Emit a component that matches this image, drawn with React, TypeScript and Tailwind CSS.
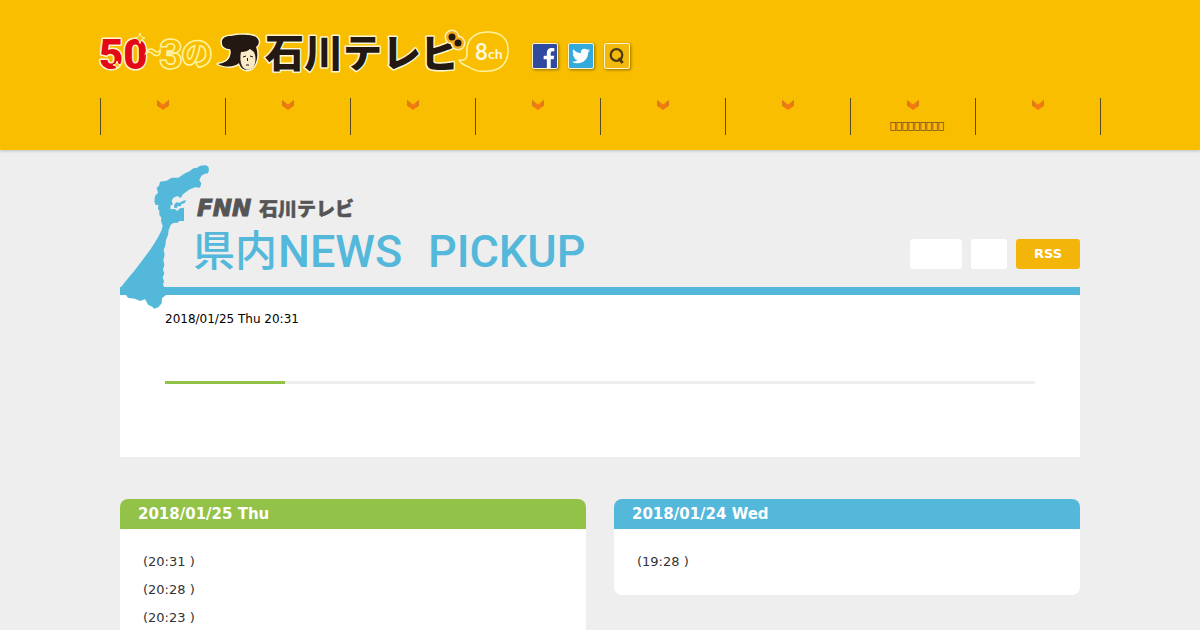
import type { ReactNode } from "react"
import { FaFacebookF, FaTwitter } from "react-icons/fa"

interface NavItem {
  id: string
  label: string
}

interface NewsDay {
  date: string
  color: string
  times: string[]
}

const navItems: NavItem[] = [
  { id: "nav1", label: "" },
  { id: "nav2", label: "" },
  { id: "nav3", label: "" },
  { id: "nav4", label: "" },
  { id: "nav5", label: "" },
  { id: "nav6", label: "" },
  { id: "nav7", label: "\uE000\uE000\uE000\uE000\uE000\uE000\uE000\uE000\uE000" },
  { id: "nav8", label: "" },
]

const newsDays: NewsDay[] = [
  { date: "2018/01/25 Thu", color: "bg-[#93c248]", times: ["20:31", "20:28", "20:23"] },
  { date: "2018/01/24 Wed", color: "bg-[#54b8db]", times: ["19:28"] },
]

function Logo() {
  return (
    <svg width="412" height="50" viewBox="100 28 412 50" className="block overflow-visible">
      <text
        x="99"
        y="69"
        fontSize="42"
        className="font-['Roboto',sans-serif] font-black"
        fill="#e20a16"
        stroke="#fff6d0"
        strokeWidth="3"
        strokeLinejoin="round"
        style={{ paintOrder: "stroke" }}
      >
        50
      </text>
      <path d="M140 33l1.500 4 3.500 1-3.500 1.500-1.500 4-1.500-4-3.500-1.500 3.500-1z" fill="#f9be00" stroke="#fff3b0" />
      <path d="M117 61l1 3 3 1-3 1-1 3-1-3-3-1 3-1z" fill="#f9be00" stroke="#fff3b0" />
      <path d="M146 53c3-6 7-4 9-2s4 1 5-1c1 6-4 7-7 4-2-2-4-3-7-1z" fill="#f9be00" stroke="#fff3a0" strokeWidth="1.500" />
      <text
        x="159"
        y="69"
        fontSize="42"
        className="font-['Roboto',sans-serif] font-bold"
        fill="none"
        stroke="#fff3a0"
        strokeWidth="1.500"
      >
        3
      </text>
      <text
        x="181"
        y="65"
        fontSize="32"
        className="font-['Noto_Sans_CJK_JP',sans-serif] font-black"
        fill="none"
        stroke="#fff3a0"
        strokeWidth="1.500"
      >
        の
      </text>

      {/* mascot */}
      <path
        d="M222 43c-1-5 4-7 9-7 8-2 23-2 26 2 3 3 2 7-1 9 2 5 2 14-2 19-4 6-13 5-15-3-4 4-13 5-21 1 7-1 11-4 12-8 1-3 1-5 0-7-4 0-8-2-8-6z"
        fill="#241813"
        stroke="#fff6d0"
        strokeWidth="3"
        strokeLinejoin="round"
        style={{ paintOrder: "stroke" }}
      />
      <path d="M241 52c4 0 7-1 9-3l4 3c2 4 2 10 0 14-3 5-9 5-12 0-2-4-2-10-1-14z" fill="#fbeac6" />
      <path d="M243 57l3-1M250 56l3 1M247.500 58v3M246 65h3" fill="none" stroke="#241813" />

      <text
        x="265"
        y="67"
        fontSize="39"
        className="font-['Noto_Sans_CJK_JP',sans-serif] font-black"
        fill="#241813"
        stroke="#fff6d0"
        strokeWidth="3"
        strokeLinejoin="round"
        style={{ paintOrder: "stroke" }}
      >
        石川テレビ
      </text>
      <circle cx="452" cy="37" r="7.500" fill="#fff3b0" />
      <circle cx="458" cy="43" r="7.500" fill="#fff3b0" />
      <circle cx="452" cy="37" r="6" fill="#f6ad1b" />
      <circle cx="458" cy="43" r="6" fill="#f6ad1b" />
      <circle cx="452" cy="37" r="3.500" fill="#241813" />
      <circle cx="458" cy="43" r="3.500" fill="#241813" />

      <path
        d="M459 60c5 1 8-1 8-5-1-11 3-19 13-22 12-3 27 0 28 15 1 15-8 23-20 23-8 1-14 0-19-4-3-1-7-2-10-7z"
        fill="none"
        stroke="#fff3a0"
        strokeWidth="1.500"
        strokeLinejoin="round"
      />
      <text x="475" y="60" fontSize="22" className="font-['Lato',sans-serif] font-bold" fill="#fff8d8">
        8
      </text>
      <text x="488" y="59" fontSize="14" className="font-['Lato',sans-serif] font-bold" fill="#fff8d8">
        ch
      </text>
    </svg>
  )
}

function PrefectureMap() {
  return (
    <svg width="90" height="145" viewBox="30 30 270 435" className="absolute left-0 top-[15px]" aria-hidden="true">
      <path
        fill="#54b8db"
        d="M295 35L288 31 270 32 262 38 250 40 240 48 225 55 205 68 185 68 170 77 150 80 147 92 140 98 144 113 135 123 133 140 137 150 145 150 144 162 148 168 148 180 154 188 153 198 158 212 155 225 145 245 135 262 120 285 100 312 75 345 50 375 38 390 30 400 30 415 48 420 54 428 62 430 75 431 90 438 105 433 115 450 127 455 132 461 145 457 155 445 156 430 168 420 165 398 159 390 162 378 158 368 163 355 159 345 163 330 160 315 164 300 161 285 166 272 168 255 174 240 176 225 182 210 190 204 203 203 208 198 222 198 222 158 210 160 202 168 194 162 182 163 181 152 189 148 185 138 190 128 202 123 212 129 219 118 232 108 240 103 255 97 270 98 274 85 268 76 274 62 285 56 294 55 297 45z"
      />
      <path fill="#54b8db" d="M192 151L199 142 209 143 218 138 228 135 225 143 214 148 213 153 203 154 200 160 193 158z" />
    </svg>
  )
}

function SocialLink({ label, className, children }: { label: string; className: string; children: ReactNode }) {
  return (
    <a
      href="#"
      aria-label={label}
      className={`flex h-[26px] w-[26px] justify-center overflow-hidden rounded-xs border border-[#fff6d0] shadow-[1px_1px_3px_rgba(0,0,0,0.4)] ${className}`}
    >
      {children}
    </a>
  )
}

function DayCard({ day }: { day: NewsDay }) {
  return (
    <section className="overflow-hidden rounded-lg bg-white">
      <h2 className={`px-[18px] text-[15px] leading-[30px] font-bold text-white ${day.color}`}>{day.date}</h2>
      <ul className="px-[23px] py-[19px] text-[13px] leading-7 text-[#333]">
        {day.times.map((time) => (
          <li key={time}>({time} )</li>
        ))}
      </ul>
    </section>
  )
}

export default function App() {
  return (
    <div className="min-h-screen bg-[#eee] font-['DejaVu_Sans','Noto_Sans_CJK_JP',sans-serif]">
      <header className="relative bg-[#f9be00] pb-[15px] shadow-[0_1px_3px_rgba(0,0,0,0.2)]">
        <div className="mx-auto max-w-[1000px]">
          <div className="flex items-start gap-5 pt-7 pb-5">
            <a href="#" aria-label="石川テレビ">
              <Logo />
            </a>
            <div className="flex gap-[10px] pt-[15px]">
              <SocialLink label="Facebook" className="items-end bg-[#2f4a9e] pl-2 text-white">
                <FaFacebookF size={20} />
              </SocialLink>
              <SocialLink label="Twitter" className="items-center bg-[#34a9dc] text-white">
                <FaTwitter size={18} />
              </SocialLink>
              <SocialLink label="検索" className="items-center bg-[#f3b90c] text-[#4a3a10]">
                <svg width="18" height="18" viewBox="0 0 18 18" fill="none" stroke="currentColor">
                  <circle cx="8.500" cy="8" r="5.800" strokeWidth="2.200" />
                  <path d="M11 11l3.500 5" strokeWidth="3" />
                </svg>
              </SocialLink>
            </div>
          </div>
          <nav>
            <ul className="-mr-px grid grid-cols-8 border-r border-[#5a4a20]">
              {navItems.map((item) => (
                <li key={item.id} className="h-[37px] border-l border-[#5a4a20]">
                  <a href="#" className="flex h-full flex-col items-center text-[10px] text-[#333]">
                    <svg width="12" height="10" viewBox="0 0 12 10" className="mt-[2px] mb-2">
                      <path d="M0 0l6 4.500 6-4.500v5.500l-6 4.500-6-4.500z" fill="#f47a10" />
                      <path d="M0 0l3 2.250v5.500l-3-2.250zM12 0l-3 2.250v5.500l3-2.250z" fill="#dd7d18" />
                    </svg>
                    <span className="pl-2 leading-4">{item.label}</span>
                  </a>
                </li>
              ))}
            </ul>
          </nav>
        </div>
      </header>

      <main className="mx-auto max-w-[960px]">
        <div className="relative flex items-end justify-between pt-11 pb-[18px] pl-[74px]">
          <PrefectureMap />
          <h1>
            <svg width="392" height="75" viewBox="194 194 392 75" className="block overflow-visible">
              <text
                x="197"
                y="216"
                fontSize="23"
                className="font-['DejaVu_Sans',sans-serif] font-bold italic"
                fill="#555"
                stroke="#555"
              >
                FNN
              </text>
              <text
                x="259"
                y="216"
                fontSize="19"
                className="font-['Noto_Sans_CJK_JP',sans-serif] font-black"
                fill="#555"
                stroke="#555"
                strokeWidth="0.500"
              >
                石川テレビ
              </text>
              <text x="193" y="266" fontSize="42" className="font-['Noto_Sans_CJK_JP',sans-serif] font-medium" fill="#54b8db">
                県内
              </text>
              <text x="278" y="267" fontSize="45" className="font-['Roboto',sans-serif] font-medium" fill="#54b8db">
                NEWS
              </text>
              <text x="428" y="267" fontSize="45" className="font-['Roboto',sans-serif] font-medium" fill="#54b8db">
                PICKUP
              </text>
            </svg>
          </h1>
          <div className="flex gap-[9px] text-[13px] leading-[30px] font-bold text-white">
            <a href="#" className="h-[30px] w-[52px] rounded-[3px] bg-white" />
            <a href="#" className="h-[30px] w-9 rounded-[3px] bg-white" />
            <a href="#" className="h-[30px] w-16 rounded-[3px] bg-[#f3b50a] text-center">
              RSS
            </a>
          </div>
        </div>

        <article className="border-t-8 border-[#54b8db] bg-white px-[45px] pt-4 pb-[73px]">
          <p className="text-xs text-black">2018/01/25 Thu 20:31</p>
          <div className="mt-[54px] h-[3px] bg-[#eee]">
            <div className="h-full w-[120px] bg-[#93c248]" />
          </div>
        </article>

        <div className="mt-[42px] grid grid-cols-2 items-start gap-7">
          {newsDays.map((day) => (
            <DayCard key={day.date} day={day} />
          ))}
        </div>
      </main>
    </div>
  )
}
